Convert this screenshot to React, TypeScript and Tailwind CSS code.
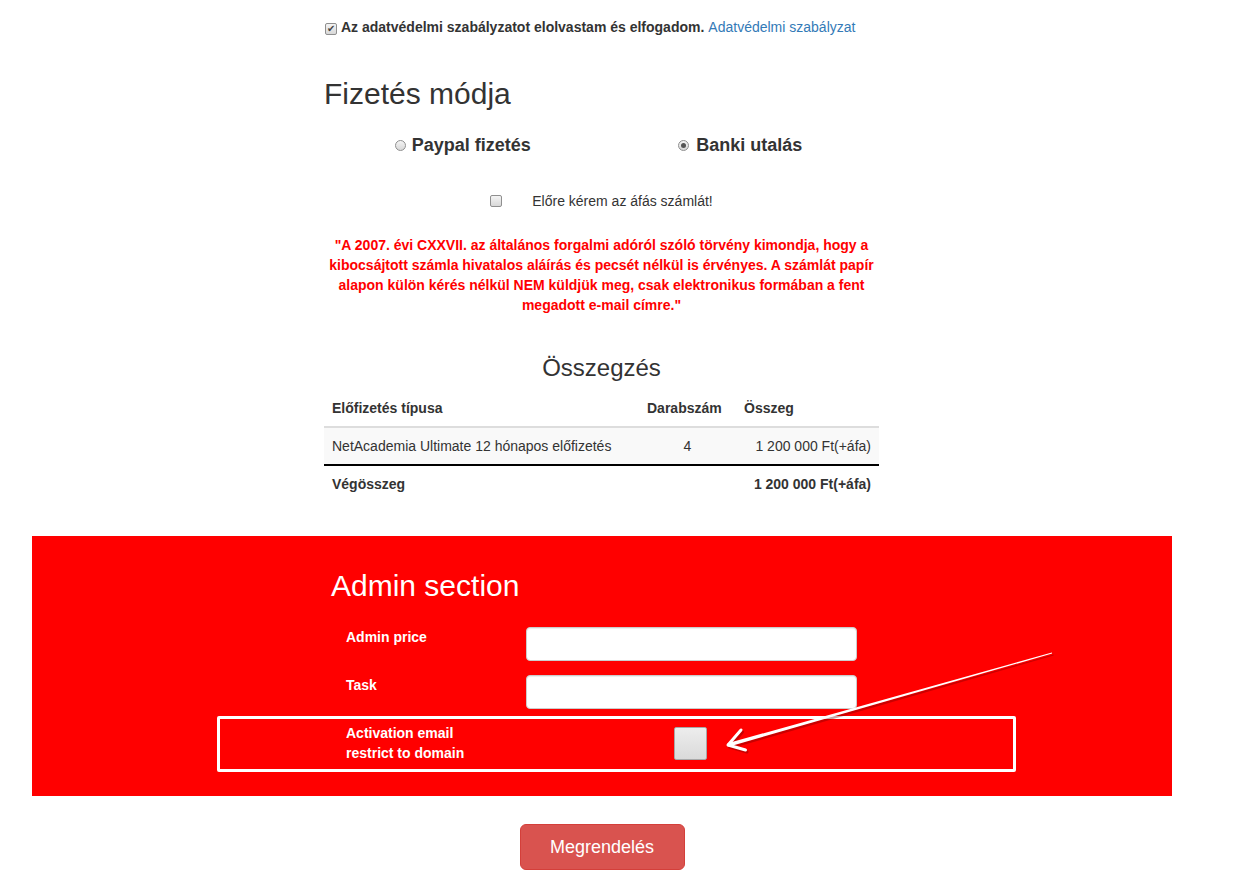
import React from 'react';

const Radio: React.FC<{ checked?: boolean }> = ({ checked }) => (
  <span className="inline-flex h-[11px] w-[11px] items-center justify-center rounded-full border border-[#8f8f8f] bg-gradient-to-b from-[#f4f4f4] to-[#d8d8d8]">
    {checked && <span className="h-[5px] w-[5px] rounded-full bg-[#555]" />}
  </span>
);

const SmallCheckbox: React.FC<{ checked?: boolean }> = ({ checked }) => (
  <span className="inline-flex h-[12px] w-[12px] items-center justify-center rounded-[2px] border border-[#8f8f8f] bg-gradient-to-b from-[#f4f4f4] to-[#d8d8d8] text-[10px] leading-none text-[#444]">
    {checked ? '✔' : ''}
  </span>
);

const Arrow: React.FC = () => (
  <svg className="pointer-events-none absolute left-0 top-0" width="1140" height="260">
    <g transform="translate(1.5 2)" opacity="0.35">
      <polygon points="696.5,210.7 695.5,207.3 1019.9,116.5 1020.1,117.5" fill="#600" />
      <polyline points="709,194 696,209 713.5,214" fill="none" stroke="#600" strokeWidth="3" strokeLinecap="round" strokeLinejoin="round" />
    </g>
    <polygon points="696.5,210.7 695.5,207.3 1019.9,116.5 1020.1,117.5" fill="#fff" />
    <polyline points="709,194 696,209 713.5,214" fill="none" stroke="#fff" strokeWidth="3" strokeLinecap="round" strokeLinejoin="round" />
  </svg>
);

export default function App() {
  return (
    <div className="min-h-[886px] bg-white font-['Liberation_Sans',Arial,sans-serif] text-[14px] leading-[20px] text-[#333]">
      <div className="ml-[32px] w-[1140px] pt-[17px]">
        <div className="ml-[292px] w-[555px]">
          {/* Privacy */}
          <div className="flex items-center">
            <span className="ml-[1px] mr-[4px]">
              <SmallCheckbox checked />
            </span>
            <b>Az adatvédelmi szabályzatot elolvastam és elfogadom.</b>
            <a href="#" className="ml-[4px] text-[#337ab7]">Adatvédelmi szabályzat</a>
          </div>

          <h2 className="mt-[40px] text-[30px] font-normal leading-[33px]">Fizetés módja</h2>

          <div className="mt-[25px] flex">
            <div className="flex w-1/2 items-center justify-center gap-[6px]">
              <Radio />
              <span className="text-[18px] font-bold">Paypal fizetés</span>
            </div>
            <div className="flex w-1/2 items-center justify-center gap-[7px]">
              <Radio checked />
              <span className="text-[18px] font-bold">Banki utalás</span>
            </div>
          </div>

          <div className="mt-[36px] flex items-center justify-center gap-[30px]">
            <SmallCheckbox />
            <span>Előre kérem az áfás számlát!</span>
          </div>

          <p className="mt-[24px] text-center font-bold text-[#ff0000]">
            "A 2007. évi CXXVII. az általános forgalmi adóról szóló törvény kimondja, hogy a kibocsájtott számla
            hivatalos aláírás és pecsét nélkül is érvényes. A számlát papír alapon külön kérés nélkül NEM küldjük meg,
            csak elektronikus formában a fent megadott e-mail címre."
          </p>

          <h3 className="mt-[40px] text-center text-[24px] font-normal leading-[26px]">Összegzés</h3>

          <table className="mt-[9px] w-full border-collapse">
            <thead>
              <tr className="border-b-2 border-[#ddd]">
                <th className="w-[315px] px-[8px] py-[8px] text-left font-bold">Előfizetés típusa</th>
                <th className="w-[97px] px-[8px] py-[8px] text-left font-bold">Darabszám</th>
                <th className="px-[8px] py-[8px] text-left font-bold">Összeg</th>
              </tr>
            </thead>
            <tbody>
              <tr className="bg-[#f9f9f9]">
                <td className="px-[8px] py-[8px]">NetAcademia Ultimate 12 hónapos előfizetés</td>
                <td className="px-[8px] py-[8px] text-center">4</td>
                <td className="px-[8px] py-[8px] text-right">1 200 000 Ft(+áfa)</td>
              </tr>
              <tr className="border-t-2 border-black">
                <td className="px-[8px] py-[8px] font-bold">Végösszeg</td>
                <td className="px-[8px] py-[8px]"></td>
                <td className="px-[8px] py-[8px] text-right font-bold">1 200 000 Ft(+áfa)</td>
              </tr>
            </tbody>
          </table>
        </div>

        {/* Admin section */}
        <div className="relative mt-[34px] bg-[#ff0000] pb-[24px] pt-[33px] text-white">
          <div className="ml-[292px] w-[555px]">
            <h2 className="ml-[7px] text-[30px] font-normal leading-[33px]">Admin section</h2>

            <div className="mt-[25px] flex">
              <label className="w-[202px] pl-[22px] font-bold">Admin price</label>
              <input className="h-[34px] w-[331px] rounded-[4px] border border-[#ccc] bg-white shadow-[inset_0_1px_1px_rgba(0,0,0,0.075)]" />
            </div>
            <div className="mt-[14px] flex">
              <label className="w-[202px] pl-[22px] font-bold">Task</label>
              <input className="h-[34px] w-[331px] rounded-[4px] border border-[#ccc] bg-white shadow-[inset_0_1px_1px_rgba(0,0,0,0.075)]" />
            </div>

            <div className="ml-[-107px] mt-[7px] flex h-[56px] w-[799px] rounded-[2px] border-[3px] border-white">
              <div className="w-[309px] pl-[126px] pt-[4px] font-bold">
                Activation email
                <br />
                restrict to domain
              </div>
              <div className="pl-[145px] pt-[8px]">
                <span className="block h-[33px] w-[33px] rounded-[2px] border border-[#a8a8a8] bg-gradient-to-b from-[#ededed] to-[#dadada]" />
              </div>
            </div>
          </div>
          <Arrow />
        </div>

        <div className="mt-[28px] flex justify-center">
          <button className="h-[46px] w-[165px] rounded-[6px] border border-[#d43f3a] bg-[#d9534f] text-[18px] text-white">
            Megrendelés
          </button>
        </div>
      </div>
    </div>
  );
}
